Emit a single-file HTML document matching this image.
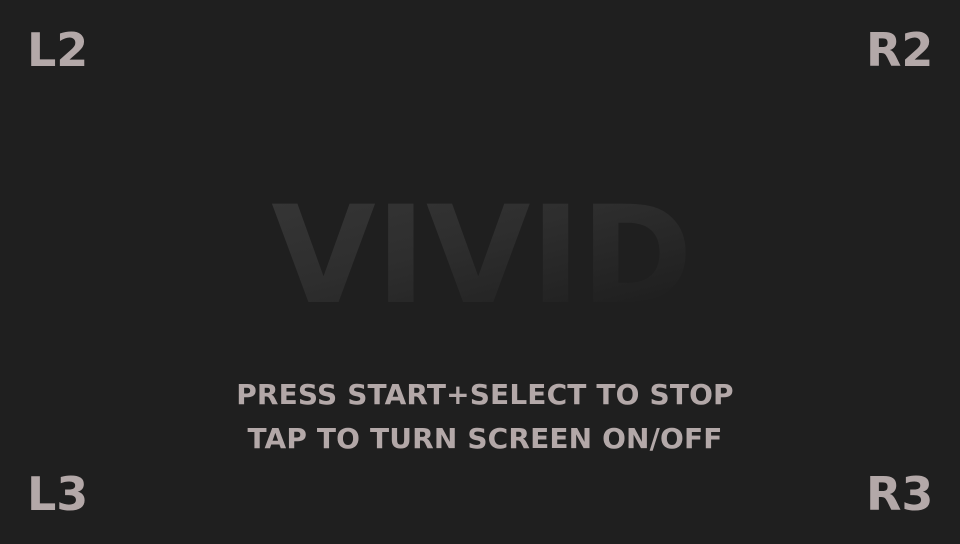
<!DOCTYPE html>
<html><head><style>
html,body{margin:0;padding:0;}
body{width:960px;height:544px;background:#1f1f1f;position:relative;overflow:hidden;font-family:"DejaVu Sans","Liberation Sans",sans-serif;font-weight:bold;}
.c{position:absolute;color:#b3a8a8;font-size:46px;line-height:1;}
.t{position:absolute;left:5px;width:960px;text-align:center;color:#b3a8a8;font-size:28px;letter-spacing:0.15px;line-height:1;}
.v{position:absolute;left:2px;width:960px;text-align:center;top:188px;font-size:135px;line-height:1;
background:linear-gradient(165deg,#3c3c3c 0%,#2e2e2e 45%,#1c1c1c 80%);-webkit-background-clip:text;background-clip:text;color:transparent;}
</style></head><body>
<div class="c" style="left:27px;top:27px">L2</div>
<div class="c" style="left:866px;top:27px">R2</div>
<div class="c" style="left:27px;top:471px">L3</div>
<div class="c" style="left:866px;top:471px">R3</div>
<div class="v">VIVID</div>
<div class="t" style="top:381px">PRESS START+SELECT TO STOP</div>
<div class="t" style="top:425px">TAP TO TURN SCREEN ON/OFF</div>
</body></html>
